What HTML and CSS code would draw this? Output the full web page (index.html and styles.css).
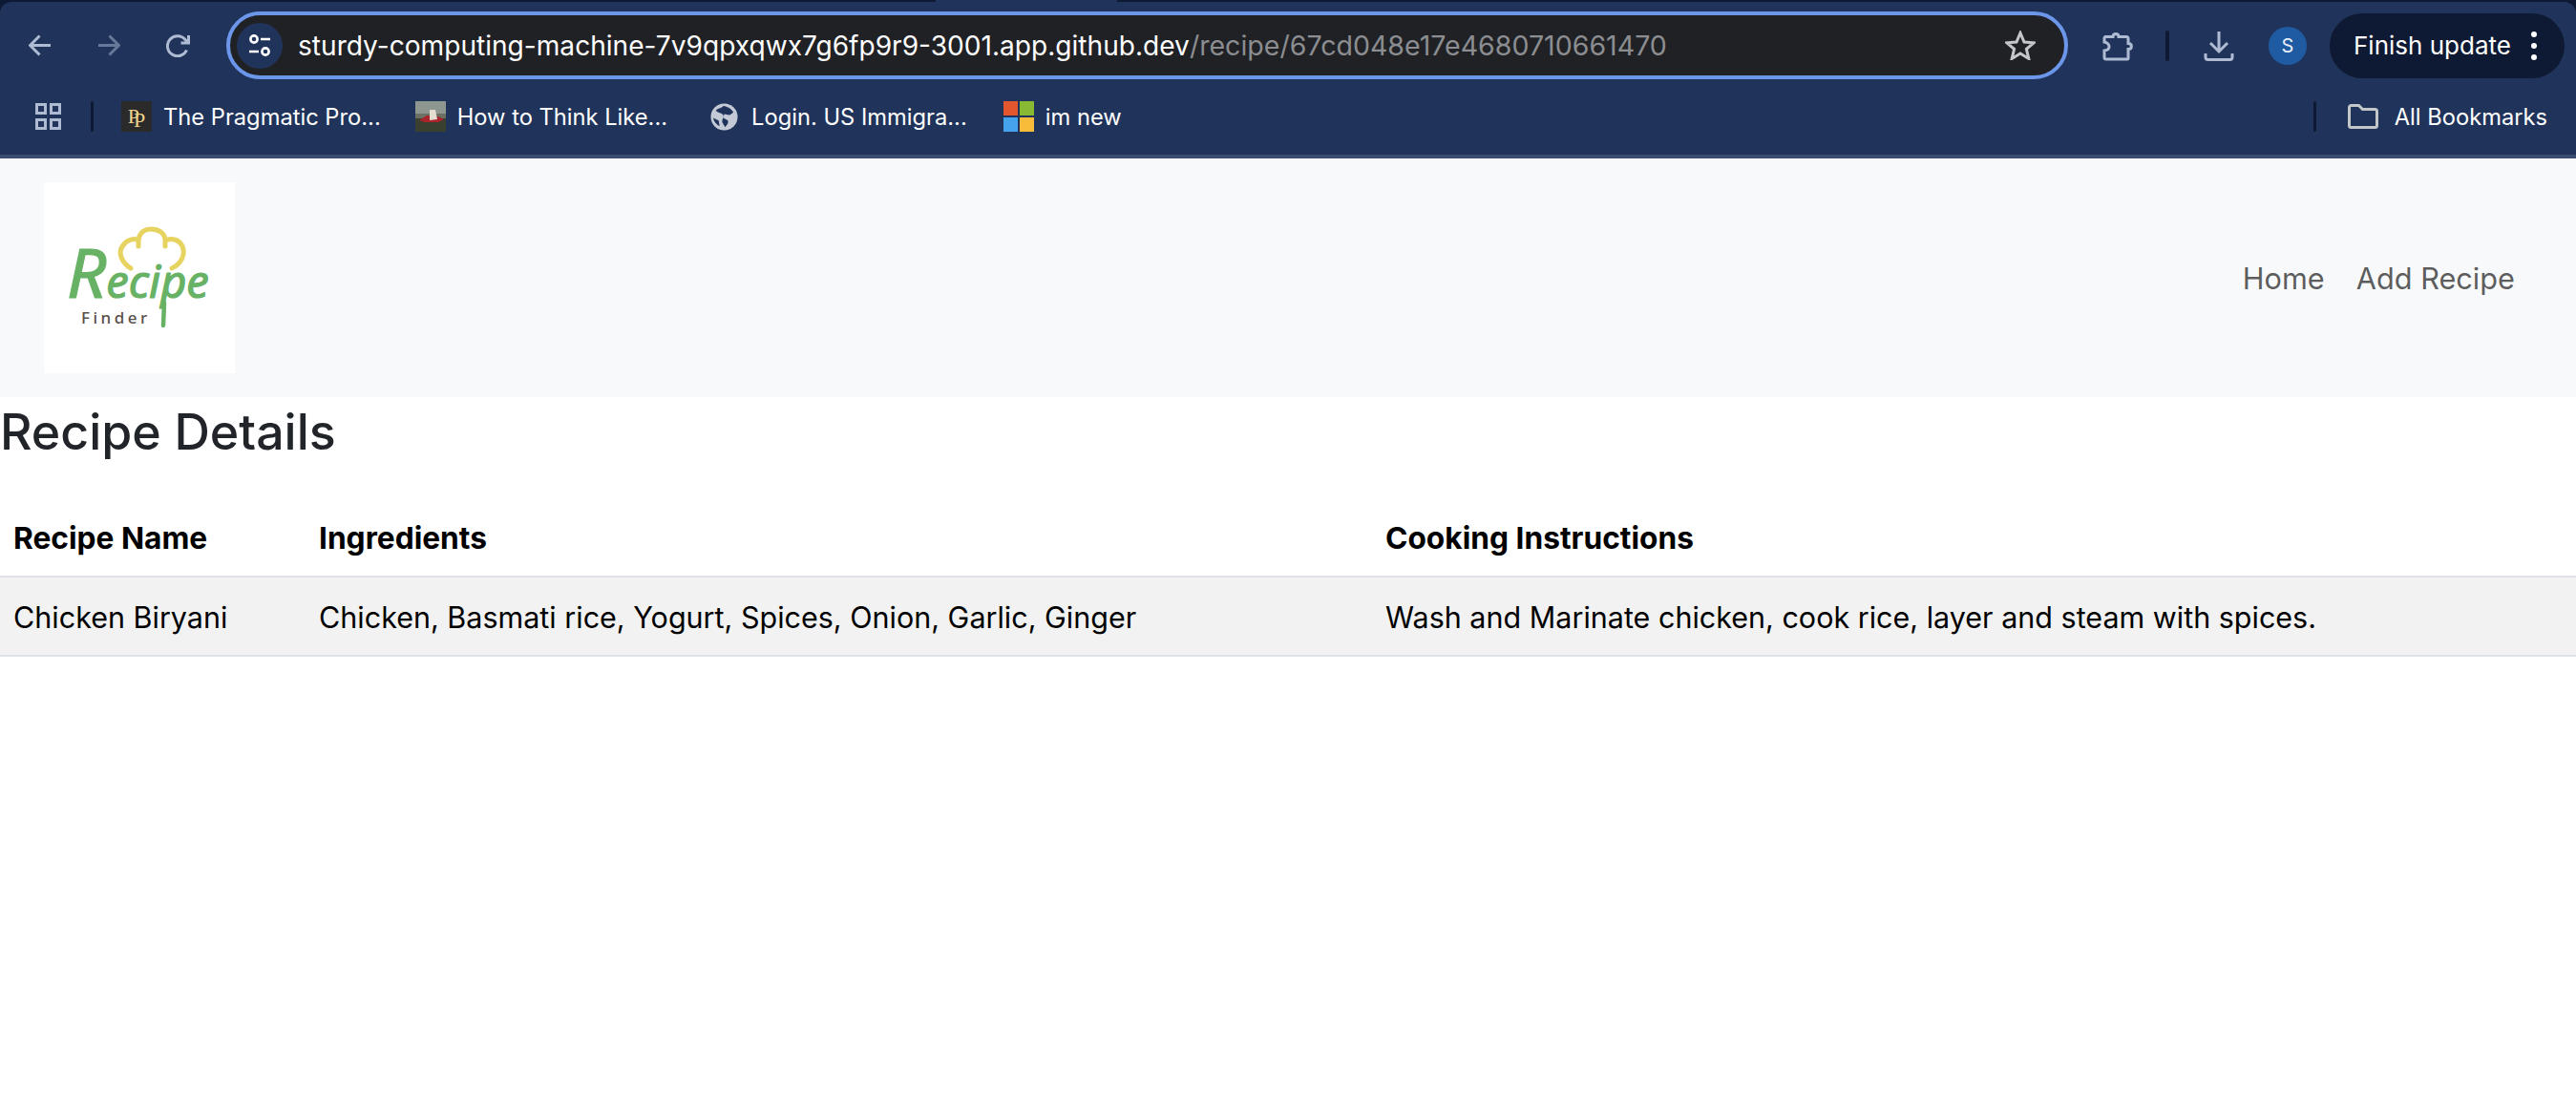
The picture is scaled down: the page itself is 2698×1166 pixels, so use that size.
FILE: index.html
```html
<!DOCTYPE html>
<html lang="en">
<head>
<meta charset="utf-8">
<title>Recipe Details</title>
<link rel="stylesheet" href="styles.css">
</head>
<body>
<header class="chrome">
  <div class="tabstrip"><span class="tab-edge"></span></div>
  <div class="toolbar">
    <svg class="ico back" viewBox="0 0 24 23"><path d="M23 11.500H2M11.500 1.500 1.500 11.500l10 10"/></svg>
    <svg class="ico fwd" viewBox="0 0 24 23"><path d="M1 11.500h21M12.500 1.500l10 10-10 10"/></svg>
    <svg class="ico reload" viewBox="0 0 26 24"><path d="M21.500 16.500A10.500 10.500 0 1 1 20 5.500l3 3M23.500 1v8h-8"/></svg>
    <div class="omnibox">
      <span class="site-chip">
        <svg class="chip-ico" viewBox="0 0 24 24"><circle cx="6" cy="5" r="3.600"/><path d="M13 5h10M1 18h10"/><circle cx="18" cy="18" r="3.600"/></svg>
      </span>
      <span class="url"><span class="url-host">sturdy-computing-machine-7v9qpxqwx7g6fp9r9-3001.app.github.dev</span><span class="url-path">/recipe/67cd048e17e4680710661470</span></span>
      <svg class="star" viewBox="0 0 32 31"><path d="m16 2.500 4 9.500 10.200.8-7.800 6.600 2.400 10L16 23.900 7.200 29.400l2.400-10-7.800-6.600 10.200-.8z"/></svg>
    </div>
    <svg class="ico puzzle" viewBox="0 0 33 32"><path d="M3 6.500h8c0-4 6-4 6 0h8a2 2 0 0 1 2 2v5c4.500 0 4.500 6 0 6v9.500a1 1 0 0 1-1 1H4a2 2 0 0 1-2-2v-7c4-.5 5-2.500 5-4s-1-4-5-5V8a2 2 0 0 1 1-1.500z"/></svg>
    <span class="sep tool-sep"></span>
    <svg class="ico download" viewBox="0 0 32 32"><path d="M16 1v20M7 13l9 9 9-9M2 24v4a2.500 2.500 0 0 0 2.500 2.500h23A2.500 2.500 0 0 0 30 28v-4"/></svg>
    <span class="avatar">S</span>
    <div class="update">
      <span class="update-text">Finish update</span>
      <span class="dots"><i></i><i></i><i></i></span>
    </div>
  </div>
  <div class="bookmarks">
    <svg class="apps" viewBox="0 0 27 28"><path d="M1.500 1.500h9v9h-9zM16.500 1.500h9v9h-9zM1.500 17.500h9v9h-9zM16.500 17.500h9v9h-9z"/></svg>
    <span class="sep bar-sep"></span>
    <a class="bm bm-first"><span class="fav fav-pp"><span>P</span><span class="pp2">P</span></span>The Pragmatic Pro...</a>
    <a class="bm"><svg class="fav" viewBox="0 0 32 32"><rect width="32" height="13" fill="#8d9790"/><rect y="13" width="32" height="5" fill="#6a7164"/><rect y="18" width="32" height="14" fill="#3a4030"/><path d="M4 20l8-5 12 1 6 3-6 3H10z" fill="#a8232a"/><path d="M15 20V9h6l2 10z" fill="#e4ddd0"/></svg>How to Think Like...</a>
    <a class="bm bm-login"><svg class="fav globe" viewBox="0 0 30 30"><circle cx="15" cy="15" r="14.500" fill="#c4cad6"/><path d="M14 3c-2 3-6 2-8 5 2 3 6 2 8 5 1 3-2 5-1 8l3 5c2-2 4-4 3-7l-5-3 1-4 6 1 4-3c-3-4-7-7-11-7zM3 16l6 3 1 6c-4-2-6-5-7-9z" fill="#20335a"/></svg>Login. US Immigra...</a>
    <a class="bm bm-ms"><span class="fav fav-ms"><i class="ms-r"></i><i class="ms-g"></i><i class="ms-b"></i><i class="ms-y"></i></span>im new</a>
    <span class="bm-spacer"></span>
    <span class="sep bar-sep end-sep"></span>
    <a class="bm all"><svg class="folder" viewBox="0 0 32 26"><path d="M1.500 3.500a2 2 0 0 1 2-2h8l4 4h13a2 2 0 0 1 2 2v15a2 2 0 0 1-2 2h-25a2 2 0 0 1-2-2z"/></svg>All Bookmarks</a>
  </div>
</header>

<nav class="navbar">
  <div class="logo">
    <svg class="logo-art" viewBox="0 0 200 200">
      <path class="hat" d="M91 90C81 84 77 73 83 66 87 60 95 58 99 61V67M99 61C100 51 107 49 112 49 120 49 127 53 127 61V67M127 61C134 58 142 60 145 67 149 76 143 86 134 90"/>
      <path class="stem" d="M126 126 125 150"/>
      <text class="logo-word" x="24" y="121"><tspan class="logo-cap">R</tspan>ecipe</text>
      <text class="logo-sub" x="39" y="148">Finder</text>
    </svg>
  </div>
  <ul class="nav-links">
    <li><a>Home</a></li>
    <li><a>Add Recipe</a></li>
  </ul>
</nav>

<main>
  <h1 class="title">Recipe Details</h1>
  <table class="recipes">
    <colgroup><col class="c1"><col class="c2"><col class="c3"></colgroup>
    <thead>
      <tr><th>Recipe Name</th><th>Ingredients</th><th>Cooking Instructions</th></tr>
    </thead>
    <tbody>
      <tr><td>Chicken Biryani</td><td>Chicken, Basmati rice, Yogurt, Spices, Onion, Garlic, Ginger</td><td>Wash and Marinate chicken, cook rice, layer and steam with spices.</td></tr>
    </tbody>
  </table>
</main>
</body>
</html>
```
FILE: styles.css
```css
* { box-sizing: border-box; }
html, body { margin: 0; height: 100%; overflow: hidden; background: #fff; }
body { font-family: Inter, "Liberation Sans", sans-serif; color: #212529; }

.chrome {
  height: 166px;
  background: #0e1a33;
  border-bottom: 4px solid #3a4c70;
}
.tabstrip { height: 2px; }
.tab-edge { display: block; width: 190px; height: 2px; margin-left: 980px; background: #20335a; }
.toolbar {
  height: 91px;
  display: flex;
  align-items: center;
  background: #20335a;
  border-radius: 12px 12px 0 0;
}
.ico { flex: none; fill: none; stroke-width: 3; stroke: #aebbd3; }
.back { width: 24px; height: 23px; margin-left: 30px; }
.fwd { width: 24px; height: 23px; margin-left: 48px; stroke: #67799b; }
.reload { width: 26px; height: 24px; margin-left: 48px; }
.omnibox {
  flex: none;
  width: 1929px;
  height: 71px;
  margin: 0 0 0 37px;
  padding-left: 7px;
  display: flex;
  align-items: center;
  background: #202124;
  border: 4px solid #6c96ea;
  border-radius: 36px;
}
.site-chip {
  flex: none;
  width: 48px;
  height: 48px;
  border-radius: 50%;
  background: #20335a;
  display: flex;
  align-items: center;
  justify-content: center;
}
.chip-ico { width: 24px; height: 24px; fill: none; stroke: #fff; stroke-width: 2.600; }
.url { flex: 1; margin-left: 16px; white-space: nowrap; }
.url-host { color: #fff; font-size: 28.100px; }
.url-path { color: #8b8d91; font-size: 28.550px; }
.star { flex: none; width: 32px; height: 31px; margin-right: 30px; fill: none; stroke: #c4c7c9; stroke-width: 3; }
.puzzle { width: 33px; height: 32px; margin-left: 36px; }
.sep { flex: none; display: block; background: #0e1a33; border-radius: 2px; }
.tool-sep { width: 4px; height: 32px; margin-left: 33px; }
.download { width: 32px; height: 32px; margin-left: 36px; }
.avatar {
  flex: none;
  width: 40px;
  height: 40px;
  margin-left: 36px;
  border-radius: 50%;
  background: #1f5ba3;
  color: #e8eefa;
  font-size: 20px;
  display: flex;
  align-items: center;
  justify-content: center;
}
.update {
  flex: none;
  width: 246px;
  height: 68px;
  margin-left: 24px;
  padding: 0 29px 0 25px;
  border-radius: 34px;
  background: #0e1a33;
  display: flex;
  align-items: center;
  justify-content: space-between;
}
.update-text { color: #fff; font-size: 26px; white-space: nowrap; }
.dots { display: flex; flex-direction: column; gap: 6px; }
.dots i { display: block; width: 6px; height: 6px; border-radius: 50%; background: #fff; }

.bookmarks { height: 69px; padding-bottom: 11px; display: flex; align-items: center; background: #20335a; }
.apps { flex: none; width: 27px; height: 28px; margin-left: 37px; fill: none; stroke: #aebbd3; stroke-width: 3; }
.bar-sep { width: 3px; height: 32px; margin-left: 31px; }
.bm {
  flex: none;
  display: flex;
  align-items: center;
  gap: 12px;
  margin-left: 36px;
  color: #fff;
  font-size: 23.700px;
  white-space: nowrap;
}
.bm-first { margin-left: 29px; }
.bm-login { margin-left: 45px; gap: 14px; }
.bm-ms { margin-left: 38px; }
.fav { flex: none; display: block; width: 32px; height: 32px; }
.fav-pp {
  background: #2a2a2a;
  color: #f0d48c;
  font-family: "Liberation Serif", serif;
  font-size: 22px;
  line-height: 1;
  display: flex;
  align-items: center;
  justify-content: center;
}
.pp2 { margin: 7px 0 0 -6px; }
.globe { width: 29px; height: 29px; }
.fav-ms { display: grid; grid-template-columns: 1fr 1fr; gap: 2px; }
.fav-ms i { display: block; }
.ms-r { background: #e4572e; }
.ms-g { background: #88b933; }
.ms-b { background: #45a3ee; }
.ms-y { background: #f8bc3a; }
.bm-spacer { flex: 1; }
.end-sep { margin: 0; }
.all { margin-left: 33px; margin-right: 30px; gap: 17px; }
.folder { flex: none; width: 32px; height: 26px; fill: none; stroke: #c4c7c9; stroke-width: 3; }

.navbar {
  height: 250px;
  padding: 0 64px 0 46px;
  background: #f8f9fa;
  display: flex;
  align-items: center;
  justify-content: space-between;
}
.logo { flex: none; width: 200px; height: 200px; background: #fff; }
.logo-art { display: block; width: 200px; height: 200px; }
.hat { fill: none; stroke: #e7d360; stroke-width: 5; stroke-linecap: round; }
.stem { fill: none; stroke: #68b266; stroke-width: 4.500; stroke-linecap: round; }
.logo-word {
  font-family: "Noto Sans", sans-serif;
  font-style: italic;
  font-size: 47px;
  fill: #68b266;
  stroke: #68b266;
  stroke-width: 1.200;
  stroke-linejoin: round;
}
.logo-cap { font-size: 72px; }
.logo-sub {
  font-family: "Noto Sans", sans-serif;
  font-weight: 500;
  font-size: 17px;
  letter-spacing: 3.500px;
  fill: #5a4f49;
}
.nav-links { list-style: none; margin: 0; padding: 0; display: flex; gap: 33px; }
.nav-links a { font-size: 30.700px; color: rgba(0, 0, 0, .65); }

.title { margin: 0; height: 72px; font-size: 51.800px; line-height: 72px; font-weight: 500; }
.recipes {
  width: 100%;
  margin-top: 33px;
  table-layout: fixed;
  border-collapse: collapse;
  color: #000;
  font-size: 30.500px;
}
.c1 { width: 320px; }
.c2 { width: 1117px; }
.recipes th, .recipes td { height: 83px; padding: 1px 14px 0; text-align: left; }
.recipes th { padding-top: 3px; font-size: 31.700px; font-weight: 700; }
.recipes thead tr { border-bottom: 2px solid #dee2e6; }
.recipes tbody tr { background: #f2f2f2; border-bottom: 2px solid #dee2e6; }
```
